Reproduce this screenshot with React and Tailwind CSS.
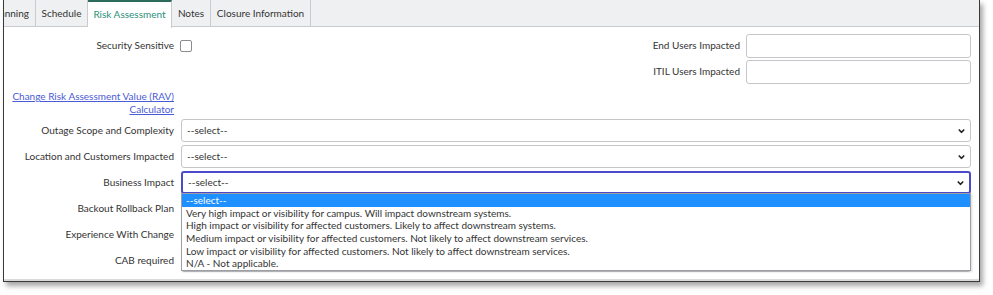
import React from "react";

const font = { fontFamily: "Lato, 'Noto Sans', sans-serif" };

function Chevron() {
  return (
    <svg width="7" height="5" viewBox="0 0 7 5" className="absolute right-[5px] top-1/2 -translate-y-1/2">
      <path d="M0.8 1 L3.5 3.8 L6.2 1" fill="none" stroke="#222" strokeWidth="1.6" />
    </svg>
  );
}

function Select({ focused, empty }) {
  return (
    <div
      className={
        "relative h-[23px] w-full rounded-[3px] bg-white flex items-center pl-[5px] text-[#333] " +
        (focused ? "border-2 border-[#4a4acb] pl-[4px]" : "border border-[#c4c6ca]")
      }
    >
      {!empty && <span>--select--</span>}
      <Chevron />
    </div>
  );
}

function Row({ label, children }) {
  return (
    <div className="flex items-center h-[23px]">
      <div className="w-[170px] text-right text-[#333] shrink-0">{label}</div>
      <div className="ml-[7px] flex-1 mr-[8px] relative">{children}</div>
    </div>
  );
}

const options = [
  "--select--",
  "Very high impact or visibility for campus. Will impact downstream systems.",
  "High impact or visibility for affected customers. Likely to affect downstream systems.",
  "Medium impact or visibility for affected customers. Not likely to affect downstream services.",
  "Low impact or visibility for affected customers. Not likely to affect downstream services.",
  "N/A - Not applicable.",
];

export default function App() {
  return (
    <div className="w-[993px] h-[295px] bg-white pl-[3px] text-[10px]" style={font}>
      <div className="w-[977px] h-[282px] border-x border-b border-[#3a3a3a] bg-white shadow-[3px_4px_5px_rgba(0,0,0,0.35)] flex flex-col">
        {/* Tabs */}
        <div className="h-[27px] bg-[#eff0f2] border-b border-[#c9cbcf] flex shrink-0">
          <div className="w-[32px] overflow-hidden flex justify-end items-center pr-[6px] border-r border-[#c9cbcf] text-[#333]">
            <span className="whitespace-nowrap">Planning</span>
          </div>
          <div className="w-[52px] flex justify-center items-center border-r border-[#c9cbcf] text-[#333]">Schedule</div>
          <div className="w-[84px] flex justify-center items-center border-r border-[#c9cbcf] bg-white border-t-2 border-t-[#2c6a5c] text-[#2a8f78] h-[28px] -mb-px pb-[2px]">
            Risk Assessment
          </div>
          <div className="w-[39px] flex justify-center items-center border-r border-[#c9cbcf] text-[#333]">Notes</div>
          <div className="w-[100px] flex justify-center items-center border-r border-[#c9cbcf] text-[#333]">Closure Information</div>
        </div>

        {/* Content */}
        <div className="flex-1 pt-[7px] flex flex-col border-b-2 border-[#d9dadc]">
          <div className="flex">
            <div className="flex-1">
              <div className="flex items-center h-[23px]">
                <div className="w-[170px] text-right text-[#333]">Security Sensitive</div>
                <div className="ml-[6px] w-[12px] h-[12px] border border-[#8a8c90] rounded-[2px] bg-white"></div>
              </div>
            </div>
            <div className="flex flex-col gap-[3px] mr-[8px]">
              <div className="flex items-center h-[23px]">
                <div className="text-right text-[#333] ml-auto">End Users Impacted</div>
                <div className="ml-[6px] w-[225px] h-[24px] border border-[#c4c6ca] rounded-[3px] bg-white"></div>
              </div>
              <div className="flex items-center h-[23px]">
                <div className="text-right text-[#333] ml-auto">ITIL Users Impacted</div>
                <div className="ml-[6px] w-[225px] h-[24px] border border-[#c4c6ca] rounded-[3px] bg-white"></div>
              </div>
            </div>
          </div>

          <div className="w-[170px] text-right mt-[7px] leading-[13px] text-[#4b5bd6] underline">
            Change Risk Assessment Value (RAV)
            <br />
            Calculator
          </div>

          <div className="flex flex-col gap-[3px] mt-[3px]">
            <Row label="Outage Scope and Complexity">
              <Select />
            </Row>
            <Row label="Location and Customers Impacted">
              <Select />
            </Row>
            <Row label="Business Impact">
              <Select focused />
              <div className="absolute left-0 right-0 top-[22px] z-10 bg-white border border-[#9c9ea2] shadow-[1px_1px_2px_rgba(0,0,0,0.15)] text-[#333]">
                {options.map((o, i) => (
                  <div
                    key={i}
                    className={
                      "h-[12.7px] leading-[12.7px] pl-[4px] whitespace-nowrap " +
                      (i === 0 ? "bg-[#1e90ff] text-white" : "")
                    }
                  >
                    {o}
                  </div>
                ))}
              </div>
            </Row>
            <Row label="Backout Rollback Plan">
              <Select empty />
            </Row>
            <Row label="Experience With Change">
              <Select empty />
            </Row>
            <Row label="CAB required">
              <Select empty />
            </Row>
          </div>
        </div>
      </div>
    </div>
  );
}
